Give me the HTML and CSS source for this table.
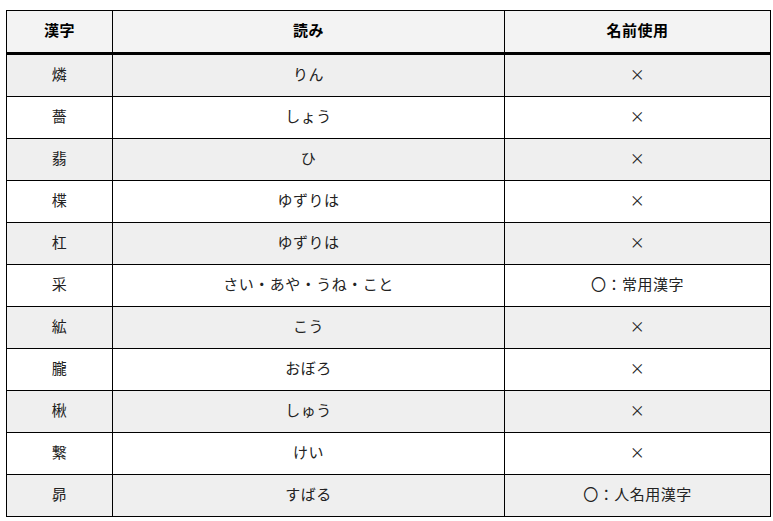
FILE: index.html
```html
<!DOCTYPE html>
<html lang="ja">
<head>
<meta charset="utf-8">
<link rel="stylesheet" href="styles.css">
</head>
<body>
<table class="kanji-table">
  <colgroup>
    <col class="col-kanji">
    <col class="col-yomi">
    <col class="col-use">
  </colgroup>
  <thead>
    <tr><th>漢字</th><th>読み</th><th>名前使用</th></tr>
  </thead>
  <tbody>
    <tr><td>燐</td><td>りん</td><td>×</td></tr>
    <tr><td>薔</td><td>しょう</td><td>×</td></tr>
    <tr><td>翡</td><td>ひ</td><td>×</td></tr>
    <tr><td>楪</td><td>ゆずりは</td><td>×</td></tr>
    <tr><td>杠</td><td>ゆずりは</td><td>×</td></tr>
    <tr><td>采</td><td>さい・あや・うね・こと</td><td>〇：常用漢字</td></tr>
    <tr><td>絋</td><td>こう</td><td>×</td></tr>
    <tr><td>朧</td><td>おぼろ</td><td>×</td></tr>
    <tr><td>楸</td><td>しゅう</td><td>×</td></tr>
    <tr><td>繋</td><td>けい</td><td>×</td></tr>
    <tr><td>昴</td><td>すばる</td><td>〇：人名用漢字</td></tr>
  </tbody>
</table>
</body>
</html>
```
FILE: styles.css
```css
html, body {
  margin: 0;
  padding: 0;
  background: #fff;
}
body {
  padding: 10px 0 0 6px;
  font-family: "Noto Sans CJK JP", "Noto Sans", sans-serif;
  font-size: 15px;
  letter-spacing: 0.5px;
  color: #222;
}
.kanji-table {
  border-collapse: collapse;
  table-layout: fixed;
  width: 764px;
}
.col-kanji { width: 106px; }
.col-yomi { width: 392px; }
.col-use { width: 266px; }
.kanji-table th,
.kanji-table td {
  border: 1px solid #000;
  text-align: center;
  vertical-align: middle;
  padding: 0 0 3px;
  line-height: 20px;
}
.kanji-table th {
  height: 38px;
  background: #f3f3f3;
  font-weight: bold;
  color: #000;
  border-bottom: 3px solid #000;
}
.kanji-table td {
  height: 38px;
}
.kanji-table tbody tr:nth-child(odd) td {
  background: #efefef;
}
```
